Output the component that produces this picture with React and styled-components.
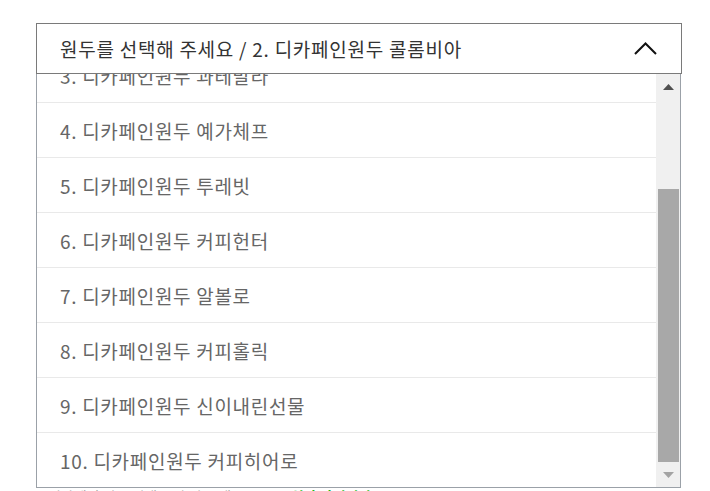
import React, { useLayoutEffect, useRef, useState } from 'react';
import styled, { createGlobalStyle } from 'styled-components';

const GlobalStyle = createGlobalStyle`
  html, body {
    margin: 0;
    padding: 0;
    background: #fff;
  }
  body {
    font-family: 'Noto Sans CJK KR', 'Noto Sans', sans-serif;
  }
`;

const Page = styled.div`
  width: 710px;
  height: 491px;
  overflow: hidden;
  padding: 23px 0 0 36px;
  box-sizing: border-box;
`;

const Select = styled.div`
  position: relative;
  width: 646px;
`;

const SelectHeader = styled.div`
  height: 51px;
  box-sizing: border-box;
  border: 1px solid #7a7a7a;
  display: flex;
  align-items: center;
  justify-content: space-between;
  padding: 0 24px 0 23px;
  color: #333;
  font-size: 19px;
  letter-spacing: 0.75px;
`;

const Dropdown = styled.div`
  position: absolute;
  top: 100%;
  left: 0;
  width: 645px;
  height: 414px;
  box-sizing: border-box;
  border: 1px solid #9ba1a8;
  border-top: 0;
  background: #fff;
  display: flex;
  z-index: 2;
`;

const Viewport = styled.ul`
  flex: 1;
  margin: 0;
  padding: 0;
  list-style: none;
  overflow: hidden;
`;

const Option = styled.li`
  height: 55px;
  box-sizing: border-box;
  border-top: 1px solid #e9e9e9;
  display: flex;
  align-items: center;
  padding-left: 23px;
  color: #666;
  font-size: 19px;
  letter-spacing: 0.7px;
`;

const Scrollbar = styled.div`
  width: 24px;
  display: flex;
  flex-direction: column;
  background: #f0f0f0;
`;

const ScrollButton = styled.div`
  height: 25px;
  flex: none;
  display: flex;
  align-items: center;
  justify-content: center;
  color: ${p => (p.$disabled ? '#a3a3a3' : '#505050')};
`;

const Track = styled.div`
  flex: 1;
  display: flex;
  flex-direction: column;
`;

const Thumb = styled.div`
  margin: 0 1px 0 2px;
  background: #a8a8a8;
`;

const Notice = styled.p`
  margin: 412px 0 0 4px;
  font-size: 14px;
  line-height: 20px;
  color: #888;
  span {
    margin-left: 14px;
    color: #1db91d;
    font-weight: 700;
  }
`;

const Chevron = () => (
  <svg width="23" height="13" viewBox="0 0 23 13" fill="none">
    <path d="M1 12 L11.5 1.5 L22 12" stroke="#111" strokeWidth="2" />
  </svg>
);

const Arrow = ({ down }) => (
  <svg width="11" height="6" viewBox="0 0 11 6">
    <path d={down ? 'M0 0 H11 L5.5 6 Z' : 'M0 6 H11 L5.5 0 Z'} fill="currentColor" />
  </svg>
);

const beans = [
  '브라질',
  '콜롬비아',
  '과테말라',
  '예가체프',
  '투레빗',
  '커피헌터',
  '알볼로',
  '커피홀릭',
  '신이내린선물',
  '커피히어로',
];

export default function App() {
  const viewRef = useRef(null);
  const trackRef = useRef(null);
  const [thumb, setThumb] = useState({ top: 0, height: 0 });

  useLayoutEffect(() => {
    const v = viewRef.current;
    v.scrollTop = v.scrollHeight;
    const trackH = trackRef.current.clientHeight;
    setThumb({
      top: (v.scrollTop / v.scrollHeight) * trackH,
      height: (v.clientHeight / v.scrollHeight) * trackH,
    });
  }, []);

  return (
    <>
      <GlobalStyle />
      <Page>
        <Select>
          <SelectHeader>
            <span>원두를 선택해 주세요 / 2. 디카페인원두 콜롬비아</span>
            <Chevron />
          </SelectHeader>
          <Dropdown>
            <Viewport ref={viewRef}>
              {beans.map((name, i) => (
                <Option key={name}>{`${i + 1}. 디카페인원두 ${name}`}</Option>
              ))}
            </Viewport>
            <Scrollbar>
              <ScrollButton><Arrow /></ScrollButton>
              <Track ref={trackRef}>
                <Thumb style={{ marginTop: thumb.top, height: thumb.height }} />
              </Track>
              <ScrollButton $disabled><Arrow down /></ScrollButton>
            </Scrollbar>
          </Dropdown>
        </Select>
        <Notice>
          • 디카페인 원두 선택 시 추가 금액<span>+3,000원 추가됩니다 &gt;</span>
        </Notice>
      </Page>
    </>
  );
}
